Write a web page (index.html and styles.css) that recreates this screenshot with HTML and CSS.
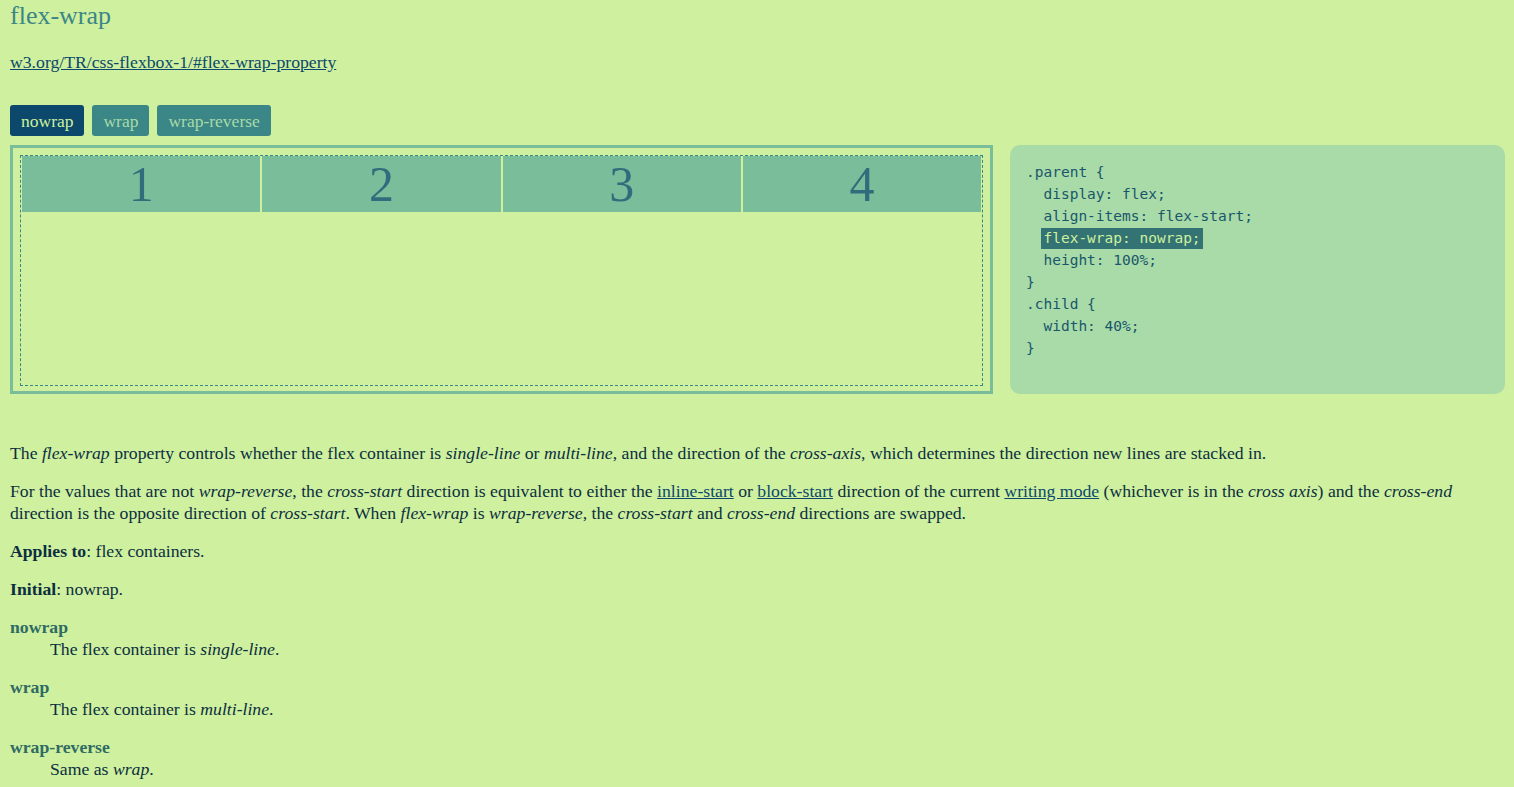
FILE: index.html
```html
<!DOCTYPE html>
<html>
<head>
<meta charset="utf-8">
<link rel="stylesheet" href="styles.css">
</head>
<body>
<div class="page">
  <h1 class="title">flex-wrap</h1>
  <p class="spec"><a href="#">w3.org/TR/css-flexbox-1/#flex-wrap-property</a></p>
  <div class="tabs">
    <button class="tab active">nowrap</button>
    <button class="tab">wrap</button>
    <button class="tab">wrap-reverse</button>
  </div>
  <div class="demo-row">
    <div class="demo">
      <div class="parent">
        <div class="child">1</div>
        <div class="child">2</div>
        <div class="child">3</div>
        <div class="child">4</div>
      </div>
    </div>
    <pre class="code">.parent {
  display: flex;
  align-items: flex-start;
  <span class="hl">flex-wrap: nowrap;</span>
  height: 100%;
}
.child {
  width: 40%;
}</pre>
  </div>
  <div class="desc">
    <p>The <em>flex-wrap</em> property controls whether the flex container is <em>single-line</em> or <em>multi-line</em>, and the direction of the <em>cross-axis</em>, which determines the direction new lines are stacked in.</p>
    <p>For the values that are not <em>wrap-reverse</em>, the <em>cross-start</em> direction is equivalent to either the <a href="#">inline-start</a> or <a href="#">block-start</a> direction of the current <a href="#">writing mode</a> (whichever is in the <em>cross axis</em>) and the <em>cross-end</em> direction is the opposite direction of <em>cross-start</em>. When <em>flex-wrap</em> is <em>wrap-reverse</em>, the <em>cross-start</em> and <em>cross-end</em> directions are swapped.</p>
    <p><strong>Applies to</strong>: flex containers.</p>
    <p><strong>Initial</strong>: nowrap.</p>
    <dl class="values">
      <dt>nowrap</dt>
      <dd>The flex container is <em>single-line</em>.</dd>
      <dt>wrap</dt>
      <dd>The flex container is <em>multi-line</em>.</dd>
      <dt>wrap-reverse</dt>
      <dd>Same as <em>wrap</em>.</dd>
    </dl>
  </div>
</div>
</body>
</html>
```

FILE: styles.css
```css
html, body {
  margin: 0;
  padding: 0;
  background: #cff09e;
}
body {
  font-family: "Liberation Serif", "Times New Roman", serif;
  color: #0b2f3f;
  font-size: 17.7px;
  line-height: 22px;
}
.page {
  padding: 0 10px 0 10px;
}
.title {
  margin: 0;
  font-weight: normal;
  font-size: 26px;
  line-height: 32px;
  color: #3b8686;
}
.spec {
  margin: 19px 0 0 0;
}
a {
  color: #0b486b;
}
.tabs {
  display: flex;
  gap: 8px;
  margin-top: 32px;
}
.tab {
  font-family: inherit;
  font-size: 17.5px;
  line-height: 20px;
  height: 31px;
  padding: 0 11px;
  border: none;
  border-radius: 3px;
  background: #3b8686;
  color: #a8dba8;
}
.tab.active {
  background: #0b486b;
  color: #cff09e;
}
.demo-row {
  display: flex;
  gap: 17px;
  margin-top: 9px;
  height: 249px;
}
.demo {
  flex: 0 0 983px;
  box-sizing: border-box;
  border: 3px solid #79bd9a;
  padding: 7px 7px 5px 7px;
}
.parent {
  display: flex;
  align-items: flex-start;
  flex-wrap: nowrap;
  height: 100%;
  box-sizing: border-box;
  border: 1px dashed #3b8686;
}
.child {
  width: 40%;
  box-sizing: border-box;
  background: #79bd9a;
  border: 1px solid #cff09e;
  border-top: none;
  text-align: center;
  font-size: 50px;
  line-height: 57px;
  height: 57px;
  color: #2f6d7c;
}
.code {
  flex: 0 0 495px;
  box-sizing: border-box;
  margin: 0;
  background: #a8dba8;
  border-radius: 10px;
  padding: 16px 17px 16px 16px;
  font-family: "DejaVu Sans Mono", "Liberation Mono", monospace;
  font-size: 14.5px;
  line-height: 22px;
  color: #1a566b;
}
.hl {
  display: inline-block;
  vertical-align: baseline;
  line-height: 21px;
  background: #337373;
  color: #cff09e;
  padding: 0 2px;
  margin-left: -2px;
}
.desc {
  margin-top: 48px;
}
.desc p {
  margin: 0 0 16px 0;
}
.values {
  margin: 0;
}
.values dt {
  font-weight: bold;
  color: #2f6b63;
}
.values dd {
  margin: 0 0 16px 40px;
}
```
